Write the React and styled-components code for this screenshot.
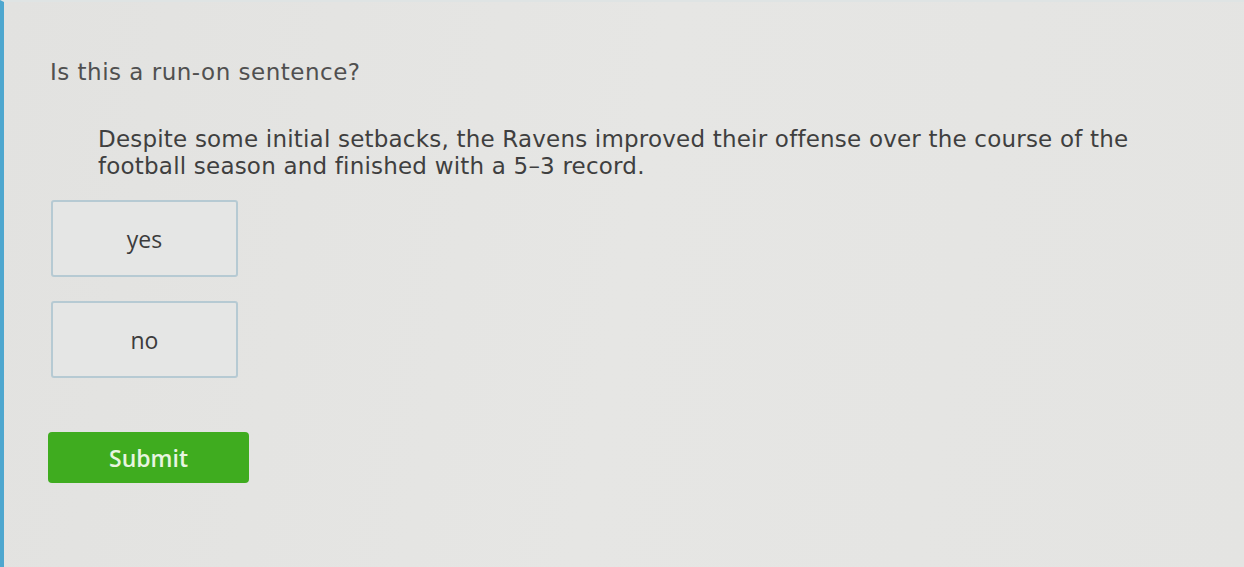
import styled, { createGlobalStyle } from 'styled-components';

const GlobalStyle = createGlobalStyle`
    html, body {
        margin: 0;
        padding: 0;
        background: #e3e3e1;
    }
`;

const Page = styled.div`
    position: relative;
    width: 1244px;
    height: 567px;
    box-sizing: border-box;
    background: linear-gradient(100deg, #e2e2e0 0%, #e6e6e4 50%, #e4e4e2 100%);
    border-left: 4px solid #4ea7cf;
    border-top: 2px solid #dfe4e4;
    padding: 56px 0 0 44px;
    font-family: 'DejaVu Sans', Verdana, sans-serif;
    color: #454545;
    overflow: hidden;
`;

const Question = styled.div`
    margin-left: 2px;
    font-size: 23px;
    line-height: 28px;
    letter-spacing: 0.5px;
    color: #505050;
`;

const Passage = styled.p`
    margin: 40px 0 0 50px;
    width: 1100px;
    font-size: 23px;
    line-height: 27px;
    letter-spacing: 0.2px;
    color: #3f3f3f;
`;

const Choices = styled.div`
    display: flex;
    flex-direction: column;
    gap: 24px;
    margin-top: 20px;
    margin-left: 3px;
`;

const Choice = styled.button`
    width: 187px;
    height: 77px;
    box-sizing: border-box;
    background: #e5e6e5;
    border: 2px solid #b6cad3;
    border-radius: 3px;
    font-family: 'Open Sans', 'Noto Sans', sans-serif;
    font-size: 23px;
    color: #3c3c3c;
    padding: 0;
    cursor: pointer;
`;

const SubmitButton = styled.button`
    margin-top: 54px;
    width: 201px;
    height: 51px;
    border: none;
    border-radius: 4px;
    background: #3fac1f;
    color: #e8f5e0;
    font-family: 'Open Sans', 'Noto Sans', sans-serif;
    font-weight: 600;
    font-size: 23px;
    cursor: pointer;
`;

export default function App() {
    return (
        <>
            <GlobalStyle />
            <Page>
                <Question>Is this a run-on sentence?</Question>
                <Passage>
                    Despite some initial setbacks, the Ravens improved their offense over the course of the
                    football season and finished with a 5–3 record.
                </Passage>
                <Choices>
                    <Choice>yes</Choice>
                    <Choice>no</Choice>
                </Choices>
                <SubmitButton>Submit</SubmitButton>
            </Page>
        </>
    );
}
